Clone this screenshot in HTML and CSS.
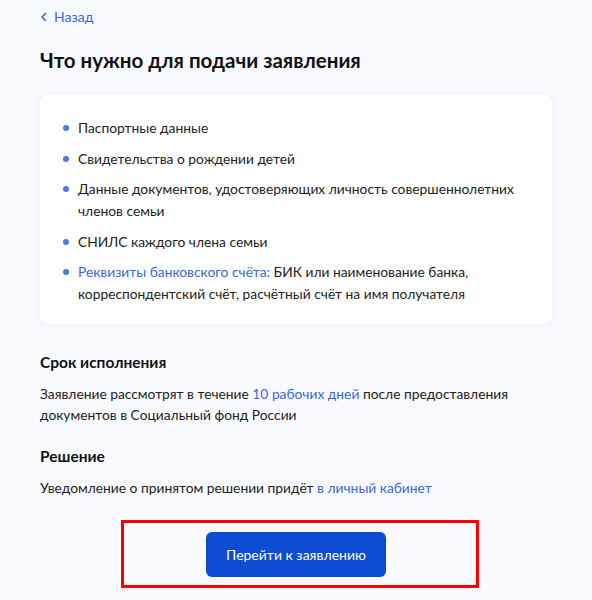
FILE: index.html
```html
<!DOCTYPE html>
<html lang="ru">
<head>
	<meta charset="UTF-8">
	<title>Что нужно для подачи заявления</title>
	<link rel="stylesheet" href="styles.css">
</head>
<body>
	<div class="page">
		<a href="javascript:void(0);" class="back-link">
			<svg class="back-icon" width="8" height="10" viewBox="0 0 8 10"><path d="M5.5 1.5 2 5l3.5 3.5" fill="none" stroke="currentColor" stroke-width="1.6" stroke-linecap="round" stroke-linejoin="round"/></svg>
			Назад
		</a>
		<h1 class="page-title">Что нужно для подачи заявления</h1>

		<div class="docs-card">
			<ul class="docs-list">
				<li>Паспортные данные</li>
				<li>Свидетельства о рождении детей</li>
				<li>Данные документов, удостоверяющих личность совершеннолетних членов семьи</li>
				<li>СНИЛС каждого члена семьи</li>
				<li><a href="javascript:void(0);" class="link">Реквизиты банковского счёта:</a> БИК или наименование банка, корреспондентский счёт, расчётный счёт на имя получателя</li>
			</ul>
		</div>

		<h2 class="section-title">Срок исполнения</h2>
		<p class="section-text">Заявление рассмотрят в течение <a href="javascript:void(0);" class="link">10 рабочих дней</a> после предоставления документов в Социальный фонд России</p>

		<h2 class="section-title second">Решение</h2>
		<p class="section-text">Уведомление о принятом решении придёт <a href="javascript:void(0);" class="link">в личный кабинет</a></p>

		<!-- выделение кнопки -->
		<div class="action-box">
			<a href="javascript:void(0);" class="main-button">Перейти к заявлению</a>
		</div>
	</div>
</body>
</html>
```

FILE: styles.css
```css
* {
	margin: 0;
	padding: 0;
	box-sizing: border-box;
}
body {
	background-color: #f9faff;
	font-family: Lato, "Noto Sans", sans-serif;
	color: #0b1f33;
}
a {
	text-decoration: none;
}
.page {
	width: 512px;
	margin-left: 40px;
	padding-top: 6px;
}
.back-link {
	display: inline-flex;
	align-items: center;
	gap: 6px;
	font-size: 14px;
	line-height: 18px;
	color: #3767dd;
}
.back-icon {
	display: block;
}
.page-title {
	margin-top: 20px;
	font-size: 20.5px;
	line-height: 28px;
	font-weight: 700;
	color: #111;
}
.docs-card {
	margin-top: 21px;
	background-color: #fff;
	border-radius: 8px;
	box-shadow: 0 1px 6px rgba(40, 60, 120, 0.07);
	padding: 22px 20px 19px 23px;
}
.docs-list {
	list-style: none;
}
.docs-list li {
	position: relative;
	padding-left: 15px;
	font-size: 13.8px;
	line-height: 22px;
	color: #222;
	margin-bottom: 8.5px;
}
.docs-list li:last-child {
	margin-bottom: 0;
}
.docs-list li::before {
	content: "";
	position: absolute;
	left: 0;
	top: 8px;
	width: 6px;
	height: 6px;
	border-radius: 50%;
	background-color: #4a78e8;
}
.link {
	color: #3767dd;
}
.section-title {
	margin-top: 26px;
	font-size: 15.5px;
	line-height: 24px;
	font-weight: 700;
	color: #111;
}
.section-title.second {
	margin-top: 19px;
}
.section-text {
	margin-top: 9px;
	font-size: 13.8px;
	line-height: 21px;
	color: #222;
}
.action-box {
	margin-top: 22px;
	margin-left: 81px;
	width: 358px;
	height: 68px;
	border: 3px solid #f00;
	display: flex;
	justify-content: center;
	align-items: center;
}
.main-button {
	display: block;
	width: 180px;
	height: 45px;
	line-height: 45px;
	border-radius: 6px;
	background-color: #0d4cd3;
	color: #fff;
	text-align: center;
	font-size: 14px;
	margin-right: 8px;
}
```
